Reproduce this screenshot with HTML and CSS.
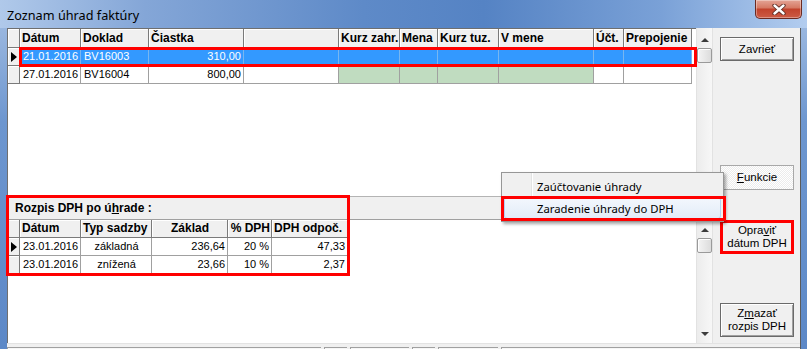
FILE: index.html
```html
<!DOCTYPE html>
<html lang="sk">
<head>
<meta charset="utf-8">
<title>Zoznam úhrad faktúry</title>
<link rel="stylesheet" href="styles.css">
</head>
<body>
<div class="window">
  <div class="titlebar">
    <span class="title">Zoznam úhrad faktúry</span>
    <span class="close"><svg width="14" height="11" viewBox="0 0 14 11"><path d="M2.5 1.5L11.5 9.5M11.5 1.5L2.5 9.5" stroke="#5b2a22" stroke-width="4.2" stroke-linecap="round"/><path d="M2.5 1.5L11.5 9.5M11.5 1.5L2.5 9.5" stroke="#fff" stroke-width="2.4" stroke-linecap="round"/></svg></span>
  </div>
  <div class="client">
    <div class="main">
      <div class="grids">
        <div class="upper">
          <div class="row head g1">
            <span class="ind"></span>
            <div class="cells">
              <span>Dátum</span><span>Doklad</span><span>Čiastka</span><span></span><span>Kurz zahr.</span><span>Mena</span><span>Kurz tuz.</span><span>V mene</span><span>Účt.</span><span>Prepojenie</span>
            </div>
          </div>
          <div class="row g1">
            <span class="ind cur"></span>
            <div class="cells sel">
              <span>21.01.2016</span><span>BV16003</span><span class="r">310,00</span><span></span><span></span><span></span><span></span><span></span><span></span><span></span>
            </div>
          </div>
          <div class="row g1">
            <span class="ind"></span>
            <div class="cells">
              <span>27.01.2016</span><span>BV16004</span><span class="r">800,00</span><span></span><span class="gr"></span><span class="gr"></span><span class="gr"></span><span class="gr"></span><span></span><span></span>
            </div>
          </div>
        </div>
        <div class="band"><span>Rozpis DPH po ú<u>h</u>rade :</span></div>
        <div class="lower">
          <div class="row head g2">
            <span class="ind"></span>
            <div class="cells">
              <span>Dátum</span><span>Typ sadzby</span><span class="c">Základ</span><span class="r">% DPH</span><span>DPH odpoč.</span>
            </div>
          </div>
          <div class="row g2">
            <span class="ind cur"></span>
            <div class="cells">
              <span>23.01.2016</span><span class="c">základná</span><span class="r">236,64</span><span class="r">20 %</span><span class="r">47,33</span>
            </div>
          </div>
          <div class="row g2">
            <span class="ind"></span>
            <div class="cells">
              <span>23.01.2016</span><span class="c">znížená</span><span class="r">23,66</span><span class="r">10 %</span><span class="r">2,37</span>
            </div>
          </div>
        </div>
        <div class="mark"></div>
      </div>
      <div class="scrolls">
        <div class="sb sb1"><span class="arrow"></span><span class="thumb"></span></div>
        <div class="sb sb2"><span class="arrow"></span><span class="thumb"></span><span class="arrow down"></span></div>
      </div>
      <div class="side">
        <button class="btn b-close">Zavrieť</button>
        <button class="btn b-func"><u>F</u>unkcie</button>
        <button class="btn b-fix flag">Opra<u>v</u>iť<br>dátum DPH</button>
        <button class="btn b-del">Z<u>m</u>azať<br>rozpis DPH</button>
      </div>
    </div>
    <div class="status">
      <span class="p1"></span><span class="p2"></span><span class="p3"></span><span class="p4"></span><span class="p5"></span><span class="p6"></span>
    </div>
  </div>
  <div class="menu">
    <div class="item">Zaúčtovanie úhrady</div>
    <div class="item hot">Zaradenie úhrady do DPH</div>
  </div>
</div>
</body>
</html>
```

FILE: styles.css
```css
* { box-sizing: border-box; margin: 0; padding: 0; }
html, body { width: 807px; height: 349px; overflow: hidden; }
body {
  font-family: "Liberation Sans", Arial, sans-serif;
  font-size: 11px;
  color: #000;
  background: #5d89c8;
}
.window {
  position: relative;
  width: 807px;
  height: 349px;
  display: flex;
  flex-direction: column;
  background: linear-gradient(180deg, #a6c0e4 0%, #6d96cf 35%, #5c88c7 100%);
}
.titlebar {
  height: 28px;
  flex: none;
  display: flex;
  justify-content: space-between;
  align-items: flex-start;
  padding: 0 5px 0 7px;
  background: linear-gradient(90deg, #b0c9ea 0%, #84a6d7 18%, #5e8ac8 45%, #5583c4 60%, #7aa1d7 82%, #b3cdef 100%);
}
.title {
  font-family: "Noto Sans", "Open Sans", sans-serif;
  font-size: 12.7px;
  line-height: 18px;
  padding-top: 6px;
  color: #000;
}
.close {
  width: 47px;
  height: 19px;
  display: flex;
  align-items: center;
  justify-content: center;
  border: 1px solid #6b2a22;
  border-top: none;
  border-radius: 0 0 5px 5px;
  background: linear-gradient(180deg, #e4a496 0%, #d67b66 42%, #c2432d 52%, #cc5b45 100%);
  box-shadow: inset 0 0 0 1px rgba(255, 255, 255, 0.35);
}
.client {
  flex: 1;
  margin: 0 6px 0 7px;
  background: #f0f0f0;
  border-right: 1px solid #5a5a5a;
  display: flex;
  flex-direction: column;
}
.main { display: flex; height: 315px; }
.grids {
  position: relative;
  width: 689px;
  display: flex;
  flex-direction: column;
  border-left: 1px solid #6f6f6f;
}
.upper {
  height: 168px;
  border-top: 1px solid #6f6f6f;
  background: #fff;
}
.band {
  height: 24px;
  background: #f0f0f0;
  border-top: 1px solid #b4b4b4;
  border-bottom: 1px solid #a0a0a0;
  padding-left: 7px;
  font-weight: bold;
  font-size: 12px;
  line-height: 22px;
}
.lower { flex: 1; background: #fff; }

.row { display: grid; grid-template-columns: 12px auto; height: 18px; }
.row.head { height: 19px; }
.g2.head { height: 18px; }
.cells { display: grid; }
.g1 .cells { grid-template-columns: 61px 68px 95px 95px 61px 38px 61px 95px 30px 68px; }
.g2 .cells { grid-template-columns: 61px 71px 76px 44px 76px; }
.cells span {
  border-right: 1px solid #a0a0a0;
  border-bottom: 1px solid #a0a0a0;
  padding: 0 2px 0 3px;
  line-height: 17px;
  white-space: nowrap;
  overflow: hidden;
}
.head .cells span {
  background: #f0f0f0;
  font-weight: bold;
  font-size: 12px;
  border-right-color: #7a7a7a;
  border-bottom-color: #7a7a7a;
  box-shadow: inset 1px 1px #fff;
  padding: 0 1px 0 2px;
}
.g1.head .cells span { line-height: 18px; }
.ind {
  display: flex;
  align-items: center;
  justify-content: center;
  background: #f0f0f0;
  border-right: 1px solid #7a7a7a;
  border-bottom: 1px solid #7a7a7a;
  box-shadow: inset 1px 1px #fff;
}
.cur::before {
  content: "";
  border-left: 6px solid #000;
  border-top: 5px solid transparent;
  border-bottom: 5px solid transparent;
}
.r { text-align: right; }
.c { text-align: center; }
.gr { background: #c0dcc0; }
.sel { outline: 3px solid #f00; outline-offset: -2px; position: relative; z-index: 1; }
.sel span { background: #3399ff; color: #fff; border-right-color: #78b6f0; border-bottom-color: #3399ff; }

.mark {
  position: absolute;
  left: -2px;
  top: 167px;
  width: 344px;
  height: 81px;
  border: 3px solid #f00;
}

.scrolls { width: 16px; display: flex; flex-direction: column; }
.sb {
  display: flex;
  flex-direction: column;
  align-items: center;
  background: linear-gradient(90deg, #ececec, #f7f7f7);
  border-left: 1px solid #e2e2e2;
}
.sb1 { height: 192px; padding-top: 3px; }
.sb2 { height: 123px; padding-top: 1px; padding-bottom: 1px; }
.arrow {
  height: 17px;
  width: 100%;
  display: flex;
  align-items: center;
  justify-content: center;
}
.arrow::before {
  content: "";
  border-left: 4px solid transparent;
  border-right: 4px solid transparent;
  border-bottom: 4px solid #3c3c3c;
}
.arrow.down { margin-top: auto; }
.arrow.down::before { border-bottom: none; border-top: 4px solid #3c3c3c; }
.thumb {
  width: 15px;
  height: 15px;
  border: 1px solid #9a9a9a;
  border-radius: 2px;
  background: linear-gradient(90deg, #f4f4f4, #dcdcdc);
  box-shadow: inset 1px 1px #fff;
}

.side {
  width: 88px;
  display: flex;
  flex-direction: column;
  align-items: flex-start;
  padding: 9px 0 0 7px;
  border-left: 1px solid #e2e2e2;
}
.btn {
  width: 74px;
  font-family: "Liberation Sans", Arial, sans-serif;
  font-size: 11.5px;
  line-height: 13px;
  color: #000;
  background: #f0f0f0;
  border: 1px solid #6a6a6a;
  box-shadow: inset 1px 1px #fff, inset -1px -1px #a0a0a0;
}
.btn u { text-decoration-thickness: 1px; }
.b-close { height: 24px; }
.b-func {
  height: 25px;
  margin-top: 104px;
  border-color: #a8a8a8;
  background: repeating-conic-gradient(#ffffff 0 25%, #ececec 0 50%) 0 0 / 2px 2px;
  box-shadow: none;
}
.b-fix { height: 34px; margin-top: 30px; }
.b-del { height: 34px; margin-top: 49px; }
.flag { outline: 3px solid #f00; outline-offset: -3px; }

.status {
  height: 6px;
  display: flex;
  gap: 3px;
  padding-top: 3px;
  border-top: 1px solid #e3e3e3;
}
.status span {
  height: 3px;
  border-top: 1px solid #a0a0a0;
  border-left: 1px solid #a0a0a0;
  background: #f6f6f6;
}
.p1 { width: 314px; }
.p2 { width: 23px; }
.p3 { width: 59px; }
.p4 { width: 23px; }
.p5 { width: 60px; }
.p6 { flex: 1; }

.menu {
  position: absolute;
  left: 501px;
  top: 172px;
  width: 223px;
  padding: 2px;
  border: 1px solid #979797;
  background: linear-gradient(90deg, transparent 29px, #e2e3e3 29px, #e2e3e3 30px, #fff 30px, #fff 31px, transparent 31px), #f0f0f0;
  box-shadow: 2px 2px 3px rgba(0, 0, 0, 0.35);
  font-family: "Noto Sans", "Open Sans", sans-serif;
  font-size: 11.3px;
  z-index: 5;
}
.item {
  position: relative;
  height: 22px;
  line-height: 21px;
  padding-left: 32px;
  border: 1px solid transparent;
  border-radius: 3px;
}
.item.hot {
  background: linear-gradient(180deg, #f3f7fd, #e2ecf8);
  border-color: #b4d1f4;
}
.item.hot::after {
  content: "";
  position: absolute;
  left: -4px;
  right: -6px;
  top: -2px;
  bottom: -3px;
  border: 3px solid #f00;
}
```
